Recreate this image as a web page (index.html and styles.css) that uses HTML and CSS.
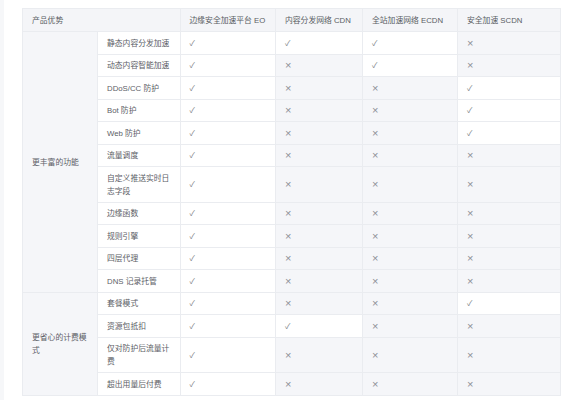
FILE: index.html
```html
<!DOCTYPE html>
<html lang="zh-CN">
<head>
<meta charset="utf-8">
<link rel="stylesheet" href="styles.css">
</head>
<body>
<div class="page">
<table class="cmp">
<colgroup>
<col class="c-group"><col class="c-feat"><col class="c-eo"><col class="c-cdn"><col class="c-ecdn"><col class="c-scdn">
</colgroup>
<thead>
<tr><th colspan="2">产品优势</th><th>边缘安全加速平台 EO</th><th>内容分发网络 CDN</th><th>全站加速网络 ECDN</th><th>安全加速 SCDN</th></tr>
</thead>
<tbody>
<tr><td class="grp" rowspan="11">更丰富的功能</td><td class="feat">静态内容分发加速</td><td class="y">✓</td><td class="y">✓</td><td class="y">✓</td><td class="n">×</td></tr>
<tr><td class="feat">动态内容智能加速</td><td class="y">✓</td><td class="n">×</td><td class="y">✓</td><td class="n">×</td></tr>
<tr><td class="feat">DDoS/CC 防护</td><td class="y">✓</td><td class="n">×</td><td class="n">×</td><td class="y">✓</td></tr>
<tr><td class="feat">Bot 防护</td><td class="y">✓</td><td class="n">×</td><td class="n">×</td><td class="y">✓</td></tr>
<tr><td class="feat">Web 防护</td><td class="y">✓</td><td class="n">×</td><td class="n">×</td><td class="y">✓</td></tr>
<tr><td class="feat">流量调度</td><td class="y">✓</td><td class="n">×</td><td class="n">×</td><td class="n">×</td></tr>
<tr><td class="feat">自定义推送实时日志字段</td><td class="y">✓</td><td class="n">×</td><td class="n">×</td><td class="n">×</td></tr>
<tr><td class="feat">边缘函数</td><td class="y">✓</td><td class="n">×</td><td class="n">×</td><td class="n">×</td></tr>
<tr><td class="feat">规则引擎</td><td class="y">✓</td><td class="n">×</td><td class="n">×</td><td class="n">×</td></tr>
<tr><td class="feat">四层代理</td><td class="y">✓</td><td class="n">×</td><td class="n">×</td><td class="n">×</td></tr>
<tr><td class="feat">DNS 记录托管</td><td class="y">✓</td><td class="n">×</td><td class="n">×</td><td class="n">×</td></tr>
<tr><td class="grp" rowspan="4">更省心的计费模式</td><td class="feat">套餐模式</td><td class="y">✓</td><td class="n">×</td><td class="n">×</td><td class="y">✓</td></tr>
<tr><td class="feat">资源包抵扣</td><td class="y">✓</td><td class="y">✓</td><td class="n">×</td><td class="n">×</td></tr>
<tr><td class="feat">仅对防护后流量计费</td><td class="y">✓</td><td class="n">×</td><td class="n">×</td><td class="n">×</td></tr>
<tr><td class="feat">超出用量后付费</td><td class="y">✓</td><td class="n">×</td><td class="n">×</td><td class="n">×</td></tr>
</tbody>
</table>
</div>
</body>
</html>
```

FILE: styles.css
```css
html, body {
  margin: 0;
  padding: 0;
  background: #ffffff;
}
body {
  font-family: "Liberation Sans", "Noto Sans CJK SC", sans-serif;
  overflow: hidden;
}
.page {
  border-left: 4px solid #f6f7f9;
  padding: 8px 18px 0 18px;
  min-height: 400px;
  box-sizing: border-box;
}
.cmp {
  width: 538px;
  table-layout: fixed;
  border-collapse: collapse;
  font-size: 7.8px;
  line-height: 13px;
  color: #5c6066;
}
.c-group { width: 75px; }
.c-feat { width: 82.5px; }
.c-eo { width: 95.5px; }
.c-cdn { width: 87px; }
.c-ecdn { width: 95px; }
.c-scdn { width: 103px; }
.cmp th, .cmp td {
  border: 1px solid #eaecf0;
  padding: 4.25px 9px;
  text-align: left;
  vertical-align: middle;
  font-weight: normal;
}
.cmp th {
  background: #f4f5f8;
  color: #595d63;
  padding-top: 4.7px;
  padding-bottom: 4.7px;
}
.grp {
  background: #f5f6f9;
}
.feat {
  background: #ffffff;
}
.y {
  background: #ffffff;
  color: #7a7e84;
}
.n {
  background: #f5f6f9;
  color: #8c9096;
  font-size: 11px;
}
```
